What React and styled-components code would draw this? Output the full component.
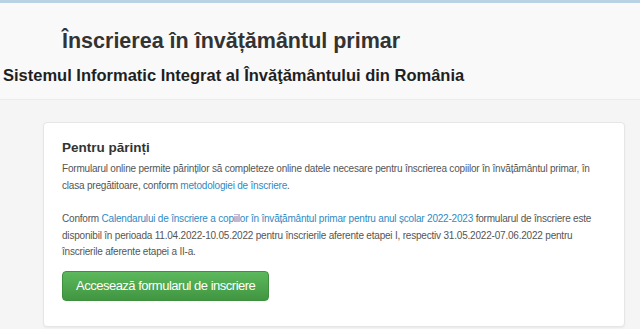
import React from 'react'
import styled, { createGlobalStyle } from 'styled-components'

const GlobalStyle = createGlobalStyle`
html, body {
margin: 0;
padding: 0;
background: #f5f5f5;
font-family: "Liberation Sans", Arial, sans-serif;
}
`

const Page = styled.div`
width: 640px;
height: 329px;
overflow: hidden;
border-top: 3px solid #b9d3e4;
box-sizing: border-box;
`

const Header = styled.header`
background: #f9f9fa;
border-bottom: 1px solid #ececec;
height: 97px;
box-sizing: border-box;
padding-top: 26px;
`

const Title = styled.h1`
margin: 0 0 0 62px;
font-size: 21.5px;
line-height: 24px;
font-weight: bold;
color: #333;
`

const Subtitle = styled.h2`
margin: 12px 0 0 3px;
font-size: 16.5px;
line-height: 20px;
font-weight: bold;
color: #1f1f1f;
`

const Main = styled.main`
padding: 22px 15px 0 43px;
`

const Card = styled.section`
background: #fff;
border: 1px solid #e6e6e6;
border-radius: 4px;
box-shadow: 0 1px 2px rgba(0,0,0,0.05);
padding: 16px 18px 25px;
`

const CardTitle = styled.h3`
margin: 0 0 4px;
font-size: 13.5px;
line-height: 18px;
font-weight: bold;
color: #333;
`

const Text = styled.p`
margin: 0 0 ${p => p.$gap}px;
font-size: 10px;
letter-spacing: -0.2px;
line-height: 16.5px;
color: #555;
`

const A = styled.a`
color: #2f8ac4;
text-decoration: none;
`

const Button = styled.a`
display: inline-block;
padding: 6px 13px;
font-size: 13px;
letter-spacing: -0.5px;
line-height: 16px;
color: #fff;
text-decoration: none;
border-radius: 4px;
background: linear-gradient(#5cb85c, #419641);
border: 1px solid #3e8f3e;
`

export default function App() {
  return (
    <>
      <GlobalStyle />
      <Page>
        <Header>
          <Title>Înscrierea în învățământul primar</Title>
          <Subtitle>Sistemul Informatic Integrat al Învăţământului din România</Subtitle>
        </Header>
        <Main>
          <Card>
            <CardTitle>Pentru părinți</CardTitle>
            <Text $gap={17}>
              Formularul online permite părinților să completeze online datele necesare pentru înscrierea copiilor în învățământul primar, în clasa pregătitoare, conform <A href="#">metodologiei de înscriere</A>.
            </Text>
            <Text $gap={10}>
              Conform <A href="#">Calendarului de înscriere a copiilor în învățământul primar pentru anul școlar 2022-2023</A> formularul de înscriere este disponibil în perioada 11.04.2022-10.05.2022 pentru înscrierile aferente etapei I, respectiv 31.05.2022-07.06.2022 pentru înscrierile aferente etapei a II-a.
            </Text>
            <Button href="#">Accesează formularul de inscriere</Button>
          </Card>
        </Main>
      </Page>
    </>
  )
}
